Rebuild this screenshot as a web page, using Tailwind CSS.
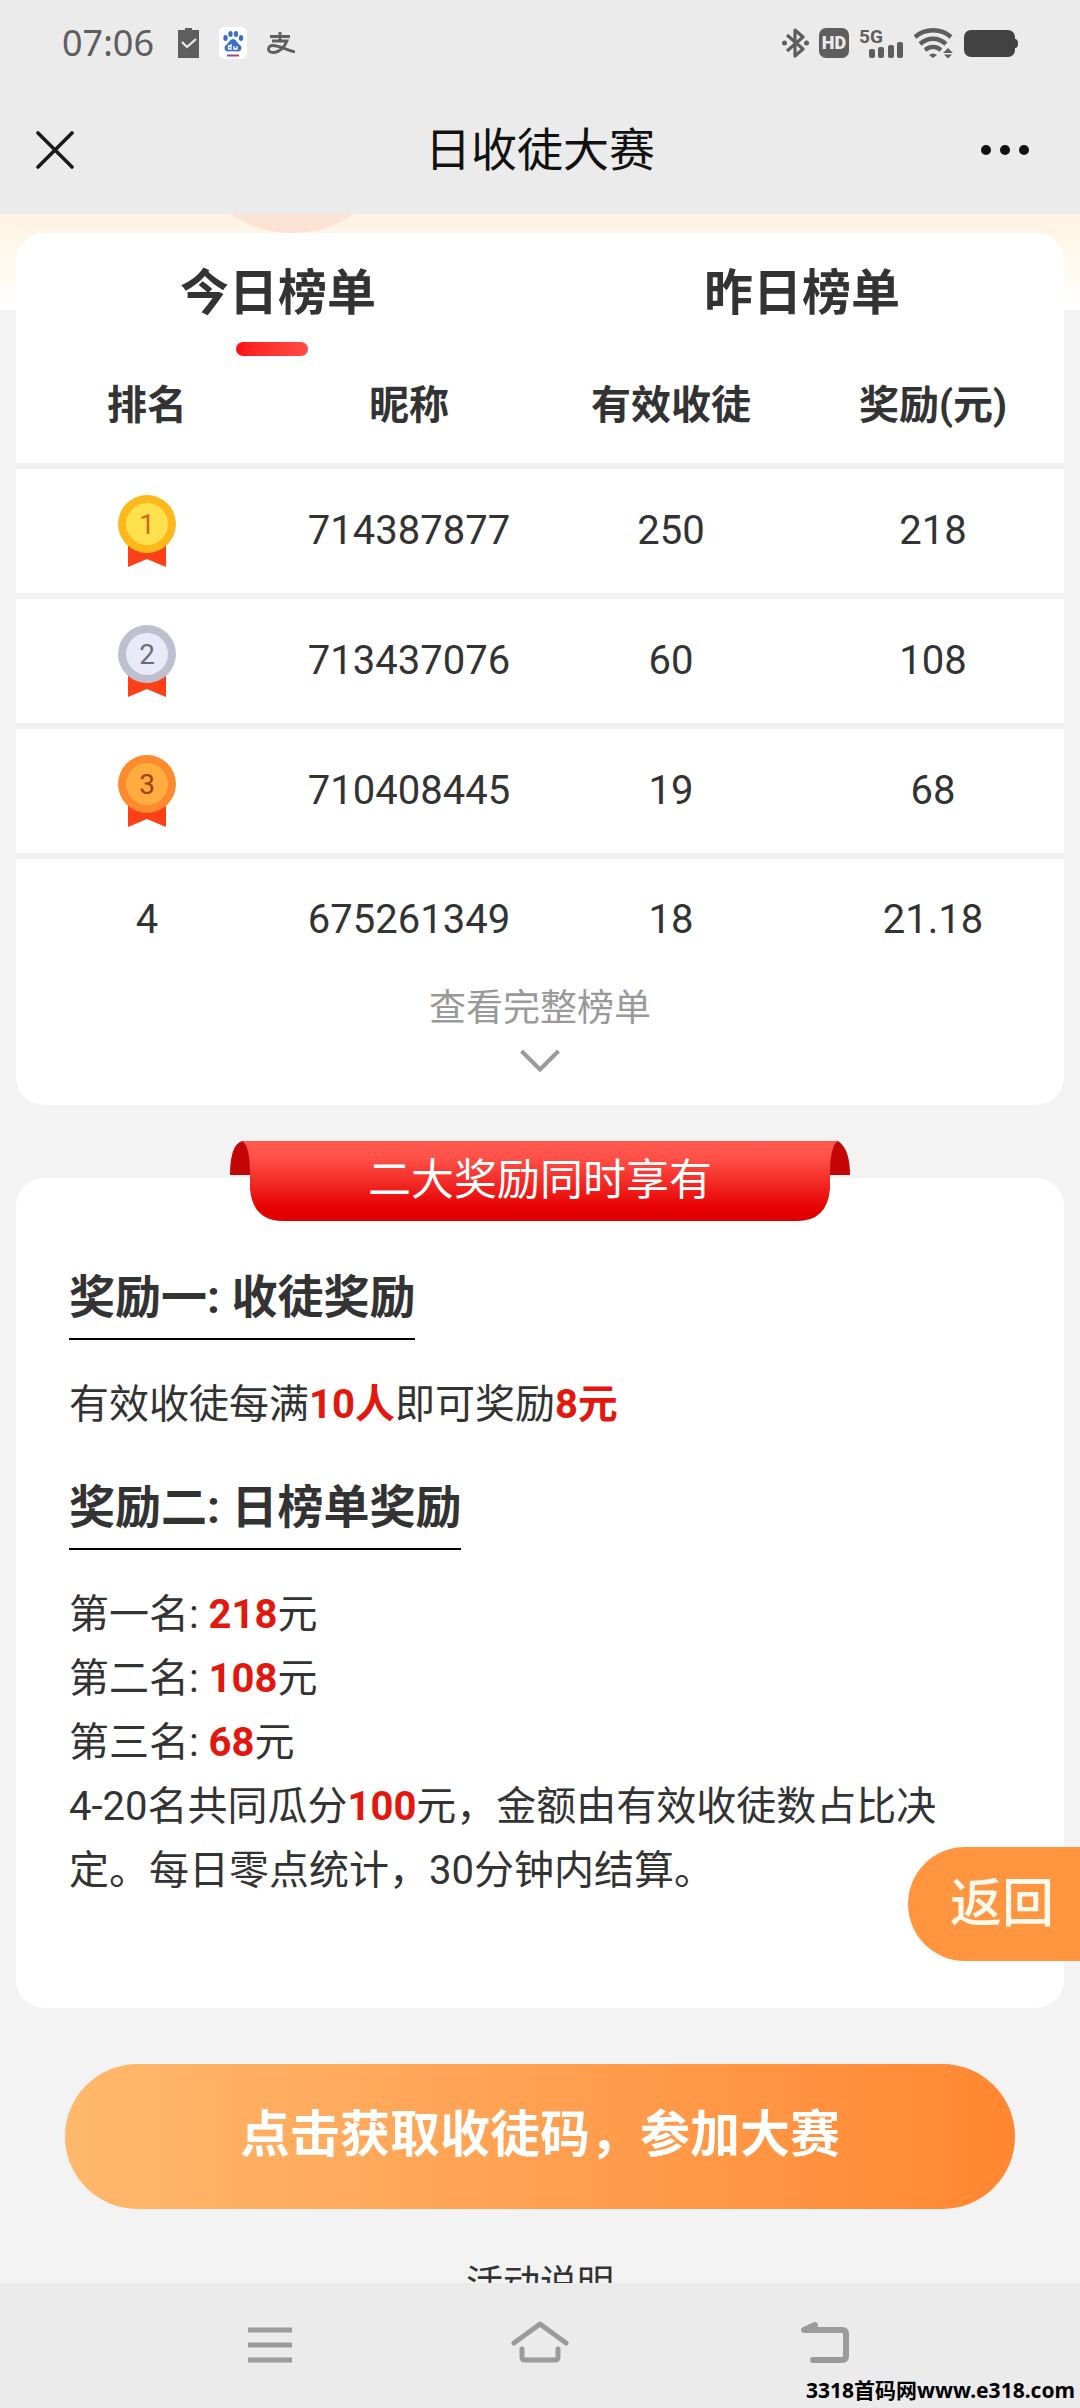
<!DOCTYPE html>
<html lang="zh-CN">
<head>
<meta charset="utf-8">
<meta name="viewport" content="width=device-width, initial-scale=1">
<title>日收徒大赛</title>
<script src="https://cdn.jsdelivr.net/npm/@tailwindcss/browser@4"></script>
</head>
<body class="relative flex h-screen flex-col overflow-hidden bg-[#f3f3f3] font-['Roboto','Noto_Sans_CJK_SC',sans-serif] text-[#333]">

<header class="relative z-10 shrink-0 bg-[#ebebeb]">
  <!-- Status bar -->
  <div class="flex h-[86px] items-center justify-between pr-[62px] pl-[62px]">
    <div class="flex items-center gap-5">
      <span class="mr-1 font-['Noto_Sans'] text-[36px] leading-none text-[#5e5e5e]">07:06</span>
      <svg class="h-[30px] w-[21px]" viewBox="0 0 21 30"><path d="M7 0h7v2h7v28H0V2h7z" fill="#5e5e5e"/><path d="M4 14l5 5 9-8" fill="none" stroke="#ebebeb" stroke-width="2.2"/></svg>
      <svg class="h-8 w-7" viewBox="0 0 28 32"><rect width="28" height="32" rx="6" fill="#fff"/><g fill="#3b6fc4"><ellipse cx="6.500" cy="11" rx="2.200" ry="3"/><ellipse cx="11.500" cy="7" rx="2.200" ry="3"/><ellipse cx="17" cy="7" rx="2.200" ry="3"/><ellipse cx="22" cy="11" rx="2.200" ry="3"/><path d="M14 12c3 0 4 4 7 6 3 3 1 7-3 6.500-3-.5-5-.5-8 0-4 .5-6-3.500-3-6.500 3-2 4-6 7-6z"/></g><path d="M12 17v5h-2.500v-3H12M15 19v3h3v-3" fill="none" stroke="#fff" stroke-width="1.300"/><path d="M8 28.500h6" stroke="#8250a0" stroke-width="2"/><path d="M14 28.500h6" stroke="#c0405a" stroke-width="2"/></svg>
      <svg class="h-[22px] w-7" viewBox="0 0 28 22" fill="none" stroke="#5e5e5e" stroke-width="2.800"><path d="M3 4.500h20M13 0v9M5 9h15c-2 5-7 11.500-14 11.500-6 0-6-7 0-7 6 0 12 4 22 6.500"/></svg>
    </div>
    <div class="flex items-center gap-[10px]">
      <svg class="h-[30px] w-[27px]" viewBox="0 0 27 30"><path d="M5 7l16 14-8 7V2l8 7L5 23" fill="none" stroke="#5e5e5e" stroke-width="3.200" stroke-linejoin="round"/><circle cx="2.500" cy="15" r="2.500" fill="#5e5e5e"/><circle cx="24.500" cy="15" r="2.500" fill="#5e5e5e"/></svg>
      <span class="flex h-[30px] w-[30px] items-center justify-center rounded-[7px] bg-[#5e5e5e] text-[18px] leading-none font-black text-[#ebebeb]">HD</span>
      <svg class="h-[30px] w-[45px] overflow-visible" viewBox="0 0 45 30" fill="#5e5e5e"><text x="0" y="15" font-family="Roboto" font-size="19" font-weight="700">5G</text><rect x="10" y="21" width="6" height="9" rx="2"/><rect x="19" y="19" width="6" height="11" rx="2"/><rect x="29" y="17" width="6" height="13" rx="2"/><rect x="38" y="14" width="6" height="16" rx="2"/></svg>
      <svg class="h-[30px] w-10" viewBox="0 0 40 30" fill="none" stroke="#5e5e5e" stroke-width="4.400"><path d="M1 9c10-9 26-9 36 0M6 16c8-7 18-7 26 0M11 22c5-4 11-4 16 0"/><path d="M15 27q4-3 8 0l-4 3zM34 20l-5 5h10zM34 30.500l4-4h-8z" fill="#5e5e5e" stroke="none"/></svg>
      <svg class="h-[27px] w-[54px]" viewBox="0 0 54 27" fill="#424242"><rect width="51" height="27" rx="7"/><path d="M51 9q3 0 3 4.500t-3 4.500z"/></svg>
    </div>
  </div>
  <!-- Title bar -->
  <div class="flex h-32 items-center justify-between pr-[51px] pl-9">
    <button type="button" aria-label="关闭" class="w-[63px]"><svg class="h-[38px] w-[38px]" viewBox="0 0 38 38" fill="none" stroke="#1a1a1a" stroke-width="3.600" stroke-linecap="round"><path d="M2 2l34 34M36 2L2 36"/></svg></button>
    <h1 class="text-[46px] leading-[64px] text-[#111]">日收徒大赛</h1>
    <button type="button" aria-label="更多"><svg class="h-3 w-12" viewBox="0 0 48 12" fill="#111"><circle cx="5" cy="6" r="5"/><circle cx="24" cy="6" r="5"/><circle cx="43" cy="6" r="5"/></svg></button>
  </div>
</header>

<main class="min-h-0 flex-1 overflow-hidden">
  <!-- Bottom edge of the banner behind the first card -->
  <div class="h-24 bg-linear-to-b from-[#fff3e2] via-[#fffaee] to-white">
    <svg class="ml-[21%] h-5 w-[130px]" viewBox="0 0 130 20"><path d="M4 0h122q-26 19-61 19T4 0z" fill="#fde2d6"/></svg>
  </div>

  <section class="relative mx-4 -mt-[77px] rounded-[28px] bg-white">
    <div class="grid grid-cols-2" role="tablist">
      <button type="button" role="tab" aria-selected="true" class="relative h-29 pt-[6px] text-[49px] leading-[64px] font-bold">今日榜单
        <span class="absolute -bottom-[7px] left-[42%] h-[14px] w-[72px] rounded-full bg-linear-to-r from-[#fb0d16] to-[#ff4a44]"></span>
      </button>
      <button type="button" role="tab" aria-selected="false" class="h-29 pt-[6px] text-[49px] leading-[64px] font-bold">昨日榜单</button>
    </div>
    <table class="w-full table-fixed border-collapse text-center text-[40px] leading-[56px]">
      <thead>
        <tr class="h-[117px]">
          <th class="font-bold">排名</th><th class="font-bold">昵称</th><th class="font-bold">有效收徒</th><th class="font-bold">奖励(元)</th>
        </tr>
      </thead>
      <tbody>
        <tr class="h-[130px] border-t-[6px] border-[#f1f1f1]">
          <td><svg class="mx-auto h-[72px] w-[58px]" viewBox="0 0 58 72" role="img" aria-label="1"><path d="M10 48h38v24l-19-8-19 8z" fill="#fb4018"/><circle cx="29" cy="29" r="29" fill="#fdb81c"/><circle cx="29" cy="29" r="21" fill="#ffe04d"/><text x="29" y="39" text-anchor="middle" font-family="Roboto" font-size="28" fill="#d2691e">1</text></svg></td>
          <td>714387877</td><td>250</td><td>218</td>
        </tr>
        <tr class="h-[130px] border-t-[6px] border-[#f1f1f1]">
          <td><svg class="mx-auto h-[72px] w-[58px]" viewBox="0 0 58 72" role="img" aria-label="2"><path d="M10 48h38v24l-19-8-19 8z" fill="#fb4018"/><circle cx="29" cy="29" r="29" fill="#bfc0cf"/><circle cx="29" cy="29" r="21" fill="#e9e9f8"/><text x="29" y="39" text-anchor="middle" font-family="Roboto" font-size="28" fill="#6c6c78">2</text></svg></td>
          <td>713437076</td><td>60</td><td>108</td>
        </tr>
        <tr class="h-[130px] border-t-[6px] border-[#f1f1f1]">
          <td><svg class="mx-auto h-[72px] w-[58px]" viewBox="0 0 58 72" role="img" aria-label="3"><path d="M10 48h38v24l-19-8-19 8z" fill="#fb4018"/><circle cx="29" cy="29" r="29" fill="#fb8b2c"/><circle cx="29" cy="29" r="21" fill="#ffad40"/><text x="29" y="39" text-anchor="middle" font-family="Roboto" font-size="28" fill="#a83c0c">3</text></svg></td>
          <td>710408445</td><td>19</td><td>68</td>
        </tr>
        <tr class="h-[125px] border-t-[6px] border-[#f1f1f1]">
          <td>4</td><td>675261349</td><td>18</td><td>21.18</td>
        </tr>
      </tbody>
    </table>
    <a href="#" class="flex flex-col items-center gap-3 pb-[33px] text-[37px] leading-[56px] text-[#999]">查看完整榜单
      <svg class="h-[23px] w-10" viewBox="0 0 40 23" fill="none" stroke="#999" stroke-width="4"><path d="M1.500 2L20 20.500 38.500 2"/></svg>
    </a>
  </section>

  <section class="relative mx-4 mt-[73px] rounded-[28px] bg-white pt-[87px] pr-24 pb-[105px] pl-[53px] text-[40px] leading-[64px]">
    <!-- Ribbon over the top edge of the card -->
    <div class="absolute -top-[37px] left-1/2 flex h-20 w-[620px] -translate-x-1/2 justify-center">
      <svg class="absolute inset-0 h-full w-full" viewBox="0 0 620 80">
        <defs><linearGradient id="ribbon" x1="0" y1="0" x2="0" y2="1"><stop offset="0" stop-color="#ff5a50"/><stop offset=".2" stop-color="#ff5249"/><stop offset=".85" stop-color="#e60000"/><stop offset="1" stop-color="#dd0000"/></linearGradient></defs>
        <path d="M12 0h596q12 8 12 34h-20H0Q0 4 12 0z" fill="#c40508"/>
        <path d="M12 0h596q-8 4-8 34v14q-3 32-33 32H53q-30 0-33-32V34Q20 4 12 0z" fill="url(#ribbon)"/>
      </svg>
      <h2 class="relative text-[43px] leading-[78px] text-white">二大奖励同时享有</h2>
    </div>

    <h3 class="w-fit border-b-2 border-black pb-[9px] text-[46px] leading-[64px] font-bold">奖励一: 收徒奖励</h3>
    <p class="mt-[33px]">有效收徒每满<b class="font-bold text-[#e3170d]">10人</b>即可奖励<b class="font-bold text-[#e3170d]">8元</b></p>
    <h3 class="mt-[38px] w-fit border-b-2 border-black pb-[9px] text-[46px] leading-[64px] font-bold">奖励二: 日榜单奖励</h3>
    <div class="mt-[33px]">
      <p>第一名: <b class="font-bold text-[#e3170d]">218</b>元</p>
      <p>第二名: <b class="font-bold text-[#e3170d]">108</b>元</p>
      <p>第三名: <b class="font-bold text-[#e3170d]">68</b>元</p>
      <p>4-20名共同瓜分<b class="font-bold text-[#e3170d]">100</b>元，金额由有效收徒数占比决定。每日零点统计，30分钟内结算。</p>
    </div>
  </section>

  <div class="mx-[65px] mt-14">
    <button type="button" class="h-[145px] w-full rounded-full bg-linear-to-r from-[#ffb86c] to-[#ff8730] pb-1 text-[50px] leading-[64px] font-bold text-white">点击获取收徒码，参加大赛</button>
  </div>
  <h2 class="mt-12 text-center text-[37px] leading-[56px]">活动说明</h2>
</main>

<button type="button" class="absolute top-[1847px] right-0 h-[114px] rounded-l-full bg-[#ff963f] pt-[2px] pr-[26px] pl-[42px] text-[52px] leading-[64px] font-medium text-[#fff8ec]">返回</button>

<nav class="relative grid h-[125px] shrink-0 grid-cols-[27%_46%_27%] bg-[#ebebeb]" aria-label="系统导航">
  <button type="button" aria-label="菜单" class="flex justify-end"><svg class="mt-[42px] h-[42px] w-11" viewBox="0 0 44 42" fill="none" stroke="#9b9b9b" stroke-width="5"><path d="M0 5h44M0 20h44M0 35h44"/></svg></button>
  <button type="button" aria-label="主页" class="flex justify-center"><svg class="mt-[38px] h-[42px] w-[58px]" viewBox="0 0 58 42" fill="none" stroke="#9b9b9b" stroke-width="5" stroke-linecap="round" stroke-linejoin="round"><path d="M3 22L29 3l26 19M11 28v8q0 3 3 3h30q3 0 3-3v-8"/></svg></button>
  <button type="button" aria-label="返回" class="flex justify-start pl-[13px]"><svg class="mt-[38px] h-[42px] w-12" viewBox="0 0 48 42" fill="none" stroke="#9b9b9b" stroke-width="6" stroke-linecap="round" stroke-linejoin="round"><path d="M14 4L3 9h38q4 0 4 4v22q0 4-4 4H12"/></svg></button>
  <p class="absolute right-[5px] bottom-1 font-['Noto_Sans','Noto_Sans_CJK_SC',sans-serif] text-[21px] leading-7 font-bold text-black">3318首码网www.e318.com</p>
</nav>
</body>
</html>
